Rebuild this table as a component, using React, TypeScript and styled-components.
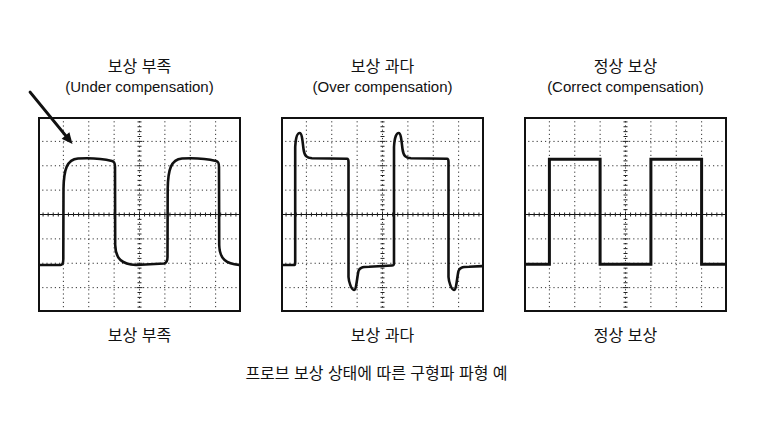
import { FC } from 'react';
import styled, { createGlobalStyle } from 'styled-components';

const SCOPE_W = 203;
const SCOPE_H = 195;
const DIV_X = SCOPE_W / 8;
const DIV_Y = SCOPE_H / 8;

interface PanelData {
  title: string;
  subtitle: string;
  label: string;
  wave: string;
  sharp?: boolean;
  arrow?: boolean;
}

const panels: PanelData[] = [
  {
    title: '보상 부족',
    subtitle: '(Under compensation)',
    label: '보상 부족',
    arrow: true,
    wave:
      'M0,148 L22.5,148 C24.5,148 25.3,146 25.3,142 L25.5,72 C25.8,52 29,42.5 40,41.5 C52,40.8 66,42 74,44 C76.5,44.6 77,46 77,50 ' +
      'L77.2,128 C77.5,142 84,147.5 98,148 L126,146.5 C128.5,146 129.5,144.5 129.5,140 L129.7,72 C130,52 133.2,42.5 144,41.5 ' +
      'C156,40.8 170,42 178,44 C180.5,44.6 181,46 181,50 L181.2,128 C181.5,142 188,147.5 203,148',
  },
  {
    title: '보상 과다',
    subtitle: '(Over compensation)',
    label: '보상 과다',
    wave:
      'M0,148 L13.5,148 C14,148 14.2,147 14.2,145 L14.2,30 C14.7,20 16.5,16 18.7,16 C21,16 21.5,24 22.5,32 C23.5,39 25.5,41 31,41.3 ' +
      'L66,41.8 C67,41.8 67.5,42.5 67.5,45 L67.5,160 C67.8,165 70.5,173 73,173 C75.5,173 76,160 77.5,154 C78.5,150.5 81,150 88,149.8 ' +
      'L111,148.5 C112.5,148.5 113,148 113,146 L113,30 C113.5,20 115.5,16 117.7,16 C120,16 120.5,24 121.5,32 C122.5,39 124.5,41 130,41.3 ' +
      'L166,41.8 C167,41.8 167.5,42.5 167.5,45 L167.5,160 C167.8,165 170.5,173 173,173 C175.5,173 176,160 177.5,154 C178.5,150.5 181,150 188,149.8 L203,149',
  },
  {
    title: '정상 보상',
    subtitle: '(Correct compensation)',
    label: '정상 보상',
    sharp: true,
    wave: 'M0,147.3 H25.4 V42.3 H76.1 V147.3 H126.9 V42.3 H177.6 V147.3 H203',
  },
];

const GlobalStyle = createGlobalStyle`
  html, body {
    margin: 0;
    padding: 0;
    background: #ffffff;
  }
  body {
    font-family: "Liberation Sans", "Noto Sans CJK KR", sans-serif;
    color: #111111;
  }
`;

const Page = styled.div`
  width: 768px;
  height: 446px;
  box-sizing: border-box;
  padding: 57px 0 0 38px;
  overflow: hidden;
`;

const Panels = styled.div`
  display: grid;
  grid-template-columns: repeat(3, ${SCOPE_W}px);
  column-gap: 40px;
`;

const Column = styled.div`
  display: flex;
  flex-direction: column;
  align-items: center;
`;

const Title = styled.div`
  font-size: 16px;
  line-height: 20px;
  white-space: nowrap;
`;

const Subtitle = styled.div`
  font-size: 15px;
  line-height: 20px;
  white-space: nowrap;
`;

const Frame = styled.div`
  position: relative;
  margin-top: 20px;
  width: ${SCOPE_W}px;
  height: ${SCOPE_H}px;
  box-sizing: border-box;
  border: 2px solid #111111;
  background: #ffffff;
`;

const Screen = styled.svg`
  display: block;
  width: 100%;
  height: 100%;
`;

const Arrow = styled.svg`
  position: absolute;
  left: -14px;
  top: -30px;
  width: 50px;
  height: 60px;
  overflow: visible;
`;

const Label = styled.div`
  margin-top: 14px;
  font-size: 16px;
  line-height: 20px;
  white-space: nowrap;
`;

const Caption = styled.div`
  width: ${SCOPE_W * 3 + 80}px;
  box-sizing: border-box;
  padding-right: 12px;
  margin-top: 18px;
  font-size: 16px;
  line-height: 20px;
  text-align: center;
  white-space: nowrap;
`;

const range = (n: number) => Array.from({ length: n }, (_v, i) => i);

const Graticule: FC = () => {
  const cx = SCOPE_W / 2;
  const cy = SCOPE_H / 2;
  return (
    <g>
      {range(7).map((i) => (
        <line
          key={`v-${i}`}
          x1={(i + 1) * DIV_X}
          x2={(i + 1) * DIV_X}
          y1={0}
          y2={SCOPE_H}
          stroke="#333"
          strokeWidth={1}
          strokeDasharray="1.2 3"
        />
      ))}
      {range(7)
        .filter((i) => i !== 3)
        .map((i) => (
          <line
            key={`h-${i}`}
            x1={0}
            x2={SCOPE_W}
            y1={(i + 1) * DIV_Y}
            y2={(i + 1) * DIV_Y}
            stroke="#333"
            strokeWidth={1}
            strokeDasharray="1.2 3"
          />
        ))}
      <line x1={0} x2={SCOPE_W} y1={cy} y2={cy} stroke="#111" strokeWidth={1.1} />
      {range(41).map((k) => {
        const size = k % 5 === 0 ? 3 : 2;
        const x = (k * DIV_X) / 5;
        return <line key={`tx-${k}`} x1={x} x2={x} y1={cy - size} y2={cy + size} stroke="#222" strokeWidth={1} />;
      })}
      {range(41).map((k) => {
        const size = k % 5 === 0 ? 3 : 2;
        const y = (k * DIV_Y) / 5;
        return <line key={`ty-${k}`} x1={cx - size} x2={cx + size} y1={y} y2={y} stroke="#222" strokeWidth={1} />;
      })}
    </g>
  );
};

const Scope: FC<{ panel: PanelData }> = ({ panel }) => (
  <Frame>
    <Screen viewBox={`2 2 ${SCOPE_W - 4} ${SCOPE_H - 4}`} preserveAspectRatio="none">
      <Graticule />
      <path
        d={panel.wave}
        fill="none"
        stroke="#111"
        strokeWidth={panel.sharp ? 3 : 2.6}
        strokeLinejoin={panel.sharp ? 'miter' : 'round'}
        strokeLinecap="butt"
      />
    </Screen>
    {panel.arrow && (
      <Arrow viewBox="0 0 50 60">
        <line x1={4} y1={3} x2={40} y2={47} stroke="#111" strokeWidth={2.8} strokeLinecap="round" />
        <polygon points="46.5,55 35.7,49.7 43.4,43.3" fill="#111" />
      </Arrow>
    )}
  </Frame>
);

const App: FC = () => (
  <Page>
    <GlobalStyle />
    <Panels>
      {panels.map((panel) => (
        <Column key={panel.subtitle}>
          <Title>{panel.title}</Title>
          <Subtitle>{panel.subtitle}</Subtitle>
          <Scope panel={panel} />
          <Label>{panel.label}</Label>
        </Column>
      ))}
    </Panels>
    <Caption>프로브 보상 상태에 따른 구형파 파형 예</Caption>
  </Page>
);

export default App;
